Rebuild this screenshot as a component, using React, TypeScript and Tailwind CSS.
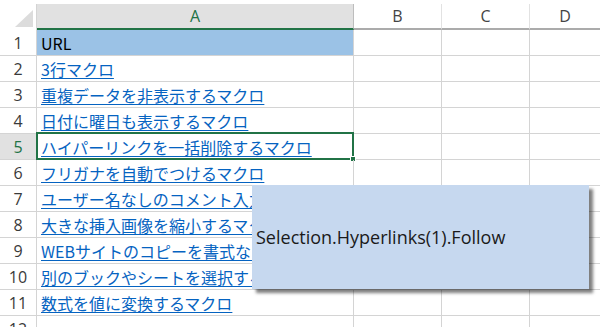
const rows = [
  'URL',
  '3行マクロ',
  '重複データを非表示するマクロ',
  '日付に曜日も表示するマクロ',
  'ハイパーリンクを一括削除するマクロ',
  'フリガナを自動でつけるマクロ',
  'ユーザー名なしのコメント入力するマクロ',
  '大きな挿入画像を縮小するマクロ',
  'WEBサイトのコピーを書式なしで貼り付けるマクロ',
  '別のブックやシートを選択するマクロ',
  '数式を値に変換するマクロ',
  '',
];

const cellFont = { fontFamily: '"Noto Sans CJK JP", "Noto Sans", sans-serif' };
const headFont = { fontFamily: '"Open Sans", "Liberation Sans", sans-serif' };

export default function App() {
  return (
    <div className="relative w-[600px] h-[327px] overflow-hidden bg-white">
      <div className="h-[4px]" />
      {/* column headers */}
      <div className="flex h-[26px]" style={headFont}>
        <div className="relative w-[37px] shrink-0 border-r border-[#d4d4d4]">
          <svg className="absolute right-[3px] bottom-[3px]" width="18" height="17" viewBox="0 0 18 17">
            <polygon points="18,0 18,17 0,17" fill="#dcdcdc" />
          </svg>
        </div>
        <div className="w-[317px] shrink-0 flex items-center justify-center bg-[#e1e1e1] border-b-2 border-[#217346] border-r border-r-[#bdbdbd] text-[16px] text-[#217346]">
          A
        </div>
        <div className="w-[88px] shrink-0 flex items-center justify-center border-b-2 border-[#ababab] border-r border-r-[#e2e2e2] text-[16px] text-[#444]">
          B
        </div>
        <div className="w-[88px] shrink-0 flex items-center justify-center border-b-2 border-[#ababab] border-r border-r-[#e2e2e2] text-[16px] text-[#444]">
          C
        </div>
        <div className="flex-1 flex items-center justify-center border-b-2 border-[#ababab] text-[16px] text-[#444]">
          D
        </div>
      </div>

      {rows.map((text, i) => {
        const n = i + 1;
        const active = n === 5;
        const isHeader = n === 1;
        return (
          <div key={n} className="flex h-[26px]">
            <div
              className={`w-[37px] shrink-0 flex items-center justify-center border-r border-b border-[#d4d4d4] text-[16px] ${
                active ? 'bg-[#e1e1e1] text-[#217346]' : 'text-[#3a3a3a]'
              }`}
              style={headFont}
            >
              {n}
            </div>
            <div
              className={`relative w-[317px] shrink-0 flex items-end pl-[4px] pb-[1px] border-r border-b border-[#d4d4d4] text-[16px] leading-[22px] whitespace-nowrap ${
                isHeader ? 'bg-[#9bc2e6] text-black' : ''
              }`}
              style={cellFont}
            >
              {text && !isHeader ? (
                <span className="text-[#0563c1] underline underline-offset-[2px]">{text}</span>
              ) : (
                text
              )}
              {active && (
                <>
                  <div className="absolute -left-[1px] -top-[2px] w-[318px] h-[28px] border-2 border-[#217346]" />
                  <div className="absolute -right-[3px] -bottom-[3px] w-[6px] h-[6px] bg-[#217346] border border-white" />
                </>
              )}
            </div>
            <div className="w-[88px] shrink-0 border-r border-b border-[#d4d4d4]" />
            <div className="w-[88px] shrink-0 border-r border-b border-[#d4d4d4]" />
            <div className="flex-1 border-b border-[#d4d4d4]" />
          </div>
        );
      })}

      <div
        className="absolute left-[252px] top-[185px] w-[337px] h-[104px] flex items-center pl-[4px] bg-[#c6d8ef] shadow-[4px_4px_3px_rgba(0,0,0,0.5)] text-[18px] text-[#1a1a1a]"
        style={headFont}
      >
        Selection.Hyperlinks(1).Follow
      </div>
    </div>
  );
}
